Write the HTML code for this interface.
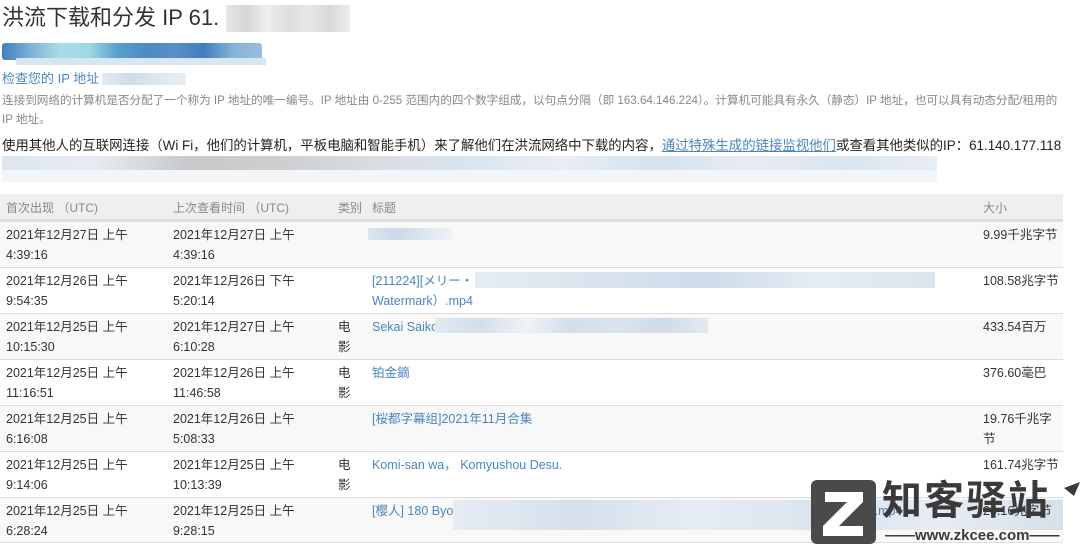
<!DOCTYPE html>
<html><head><meta charset="utf-8"><style>
*{margin:0;padding:0;box-sizing:border-box}
body{width:1080px;height:546px;overflow:hidden;background:#fff;font-family:"Liberation Sans","Noto Sans CJK SC",sans-serif;color:#333;position:relative}
.a{position:absolute;white-space:nowrap}
.blur{position:absolute}
.row{position:absolute;left:0;width:1063px;height:46px;border-top:1px solid #ddd}
.c{position:absolute;font-size:12.5px;line-height:20px;top:3px}
.l{color:#4a86c0}
</style></head><body>
<div class="a" style="left:2px;top:2px;font-size:22px;line-height:32px;color:#333">洪流下载和分发 IP 61.</div>
<div class="blur" style="left:226px;top:5px;width:124px;height:27px;background:linear-gradient(90deg,#e6e6e6,#d6d6d6,#eee,#ddd,#e8e8e8,#d8d8d8,#eee)"></div>
<div class="blur" style="left:2px;top:43px;width:260px;height:17px;border-radius:3px;background:linear-gradient(90deg,#3f7fc0,#7fb0d8,#a8dce8,#a0d8e6,#5a9fcc,#4c8ac4,#5a8ec6,#3f7fc0,#86b2d8,#9cbedd)"></div>
<div class="blur" style="left:16px;top:58px;width:250px;height:7px;background:#d8e6f2"></div>
<div class="a l" style="left:2px;top:70px;font-size:13px;line-height:18px">检查您的 IP 地址</div>
<div class="blur" style="left:102px;top:73px;width:84px;height:12px;background:linear-gradient(90deg,#e4ebf3,#ccdcea,#dde7f1,#e8eef5)"></div>
<div class="a" style="left:2px;top:91px;font-size:11.6px;line-height:19px;color:#888;white-space:normal;width:1075px">连接到网络的计算机是否分配了一个称为 IP 地址的唯一编号。IP 地址由 0-255 范围内的四个数字组成，以句点分隔（即 163.64.146.224）。计算机可能具有永久（静态）IP 地址，也可以具有动态分配/租用的<br>IP 地址。</div>
<div class="a" style="left:2px;top:137px;font-size:13.4px;line-height:18px;color:#222">使用其他人的互联网连接（Wi Fi，他们的计算机，平板电脑和智能手机）来了解他们在洪流网络中下载的内容，<span class="l" style="text-decoration:underline">通过特殊生成的链接监视他们</span>或查看其他类似的IP：61.140.177.118</div>
<div class="blur" style="left:2px;top:156px;width:935px;height:14px;background:linear-gradient(90deg,#dde6ef,#e6ecf3,#c8c8c8,#cfcfcf,#d8dde3,#dbe5ef,#e8eef4,#d6e2ee,#e6ecf3,#dbe5ef,#e8eef4)"></div>
<div class="blur" style="left:2px;top:170px;width:935px;height:12px;background:#f2f5f9"></div>

<div style="position:absolute;left:0;top:194px;width:1063px;height:27px;background:#efefef;border-bottom:2px solid #ddd"></div>
<div class="a" style="left:6px;top:199px;font-size:12px;color:#888">首次出现 （UTC)</div>
<div class="a" style="left:173px;top:199px;font-size:12px;color:#888">上次查看时间 （UTC)</div>
<div class="a" style="left:338px;top:199px;font-size:12px;color:#888">类别</div>
<div class="a" style="left:372px;top:199px;font-size:12px;color:#888">标题</div>
<div class="a" style="left:983px;top:199px;font-size:12px;color:#888">大小</div>

<div class="row" style="top:221px;background:#f8f8f8"><div class="c" style="left:6px">2021年12月27日 上午<br>4:39:16</div><div class="c" style="left:173px">2021年12月27日 上午<br>4:39:16</div><div class="blur" style="left:368px;top:6px;width:84px;height:12px;background:linear-gradient(90deg,#dde6ef,#ccd9e7,#dde6ef,#eef2f6)"></div><div class="c" style="left:983px">9.99千兆字节</div></div>
<div class="row" style="top:267px;background:#fff"><div class="c" style="left:6px">2021年12月26日 上午<br>9:54:35</div><div class="c" style="left:173px">2021年12月26日 下午<br>5:20:14</div><div class="c l" style="left:372px">[211224][メリー・<br>Watermark）.mp4</div><div class="blur" style="left:475px;top:4px;width:460px;height:16px;background:linear-gradient(90deg,#e6ecf3,#dbe4ee,#cddcea,#e6ecf3,#dbe4ee)"></div><div class="c" style="left:983px">108.58兆字节</div></div>
<div class="row" style="top:313px;background:#f8f8f8"><div class="c" style="left:6px">2021年12月25日 上午<br>10:15:30</div><div class="c" style="left:173px">2021年12月27日 上午<br>6:10:28</div><div class="c" style="left:338px">电<br>影</div><div class="c l" style="left:372px">Sekai Saiko</div><div class="blur" style="left:435px;top:4px;width:273px;height:15px;background:linear-gradient(90deg,#e3e9f1,#d3deea,#eef2f6,#d3deea,#dbe4ee,#cfdbe8,#e3e9f1)"></div><div class="c" style="left:983px">433.54百万</div></div>
<div class="row" style="top:359px;background:#fff"><div class="c" style="left:6px">2021年12月25日 上午<br>11:16:51</div><div class="c" style="left:173px">2021年12月26日 上午<br>11:46:58</div><div class="c" style="left:338px">电<br>影</div><div class="c l" style="left:372px">铂金鏑</div><div class="c" style="left:983px">376.60毫巴</div></div>
<div class="row" style="top:405px;background:#f8f8f8"><div class="c" style="left:6px">2021年12月25日 上午<br>6:16:08</div><div class="c" style="left:173px">2021年12月26日 上午<br>5:08:33</div><div class="c l" style="left:372px">[桜都字幕组]2021年11月合集</div><div class="c" style="left:983px">19.76千兆字<br>节</div></div>
<div class="row" style="top:451px;background:#fff"><div class="c" style="left:6px">2021年12月25日 上午<br>9:14:06</div><div class="c" style="left:173px">2021年12月25日 上午<br>10:13:39</div><div class="c" style="left:338px">电<br>影</div><div class="c l" style="left:372px">Komi-san wa， Komyushou Desu.</div><div class="c" style="left:983px">161.74兆字节</div></div>
<div class="row" style="top:497px;background:#f8f8f8;border-bottom:1px solid #ddd"><div class="c" style="left:6px">2021年12月25日 上午<br>6:28:24</div><div class="c" style="left:173px">2021年12月25日 上午<br>9:28:15</div><div class="c l" style="left:372px">[樱人] 180 Byo</div><div class="blur" style="left:453px;top:2px;width:610px;height:30px;background:linear-gradient(90deg,#e6ecf3,#d6e0eb,#e6ecf3,#dbe4ee,#e6ecf3,#d6e0eb)"></div><div class="c l" style="left:842px">[CHT].mp4</div><div class="c" style="left:983px">20.16兆字节</div></div>

<div style="position:absolute;left:811px;top:480px;width:65px;height:64px;background:#4a4a4a;border-radius:6px"></div>
<svg style="position:absolute;left:811px;top:480px" width="65" height="64"><path d="M14 12H52V22L28 46H52V56H12V46L36 22H14Z" fill="#fff"/></svg>
<div class="a" style="left:882px;top:478px;font-size:40px;line-height:46px;font-weight:bold;color:#3a3a3a;letter-spacing:2px">知客驿站</div>
<svg style="position:absolute;left:1064px;top:482px" width="16" height="16"><path d="M0 6L16 0L10 14Z" fill="#3a3a3a"/></svg>
<div class="a" style="left:885px;top:528px;font-size:15px;line-height:16px;font-weight:bold;color:#3a3a3a">——www.zkcee.com——</div>
</body></html>
